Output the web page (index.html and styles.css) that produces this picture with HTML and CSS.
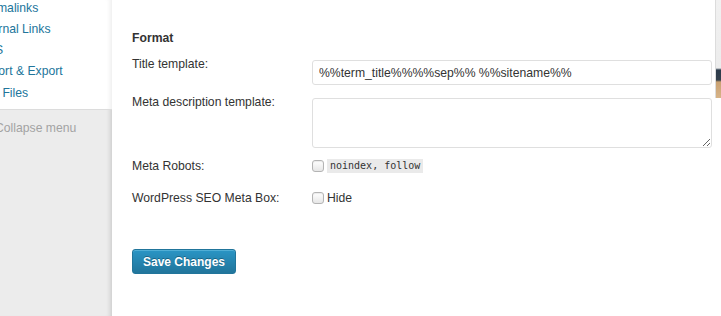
FILE: index.html
```html
<!DOCTYPE html>
<html lang="en">
<head>
    <meta charset="UTF-8">
    <meta name="viewport" content="width=device-width, initial-scale=1.0">
    <title>WordPress SEO - Titles</title>
    <link rel="stylesheet" href="styles.css">
</head>
<body>
    <div id="adminmenu">
        <ul class="submenu">
            <li><a href="#">Permalinks</a></li>
            <li><a href="#">Internal Links</a></li>
            <li><a href="#">RSS</a></li>
            <li><a href="#">Import &amp; Export</a></li>
            <li><a href="#">Edit Files</a></li>
        </ul>
        <div class="collapse">Collapse menu</div>
    </div>

    <div id="content">
        <h3>Format</h3>

        <div class="row row-title">
            <label for="title">Title template:</label>
            <input type="text" id="title" class="field" value="%%term_title%%%%sep%% %%sitename%%">
        </div>

        <div class="row row-desc">
            <label for="metadesc">Meta description template:</label>
            <textarea id="metadesc" class="field"></textarea>
        </div>

        <div class="row row-robots">
            <label for="noindex">Meta Robots:</label>
            <div class="check">
                <input type="checkbox" id="noindex">
                <code>noindex, follow</code>
            </div>
        </div>

        <div class="row row-hide">
            <label for="hide">WordPress SEO Meta Box:</label>
            <div class="check">
                <input type="checkbox" id="hide">
                <span>Hide</span>
            </div>
        </div>

        <button class="button-primary">Save Changes</button>
    </div>

    <div id="help-strip"></div>
</body>
</html>
```

FILE: styles.css
```css
body {
    font-family: "Liberation Sans", Arial, sans-serif;
    font-size: 12.2px;
    color: #333;
    background-color: #fff;
    display: flex;
    height: 316px;
    margin: 0;
    overflow: hidden;
}

#adminmenu {
    width: 112px;
    flex: none;
    background-color: #ececec;
    box-shadow: inset -5px 0 4px -3px rgba(0, 0, 0, 0.13);
    overflow: hidden;
}

.submenu {
    display: flow-root;
    box-sizing: border-box;
    list-style: none;
    margin: 0;
    padding: 0;
    height: 110px;
    background-color: #fff;
    border-bottom: 1px solid #dcdcdc;
    box-shadow: inset -5px 0 4px -3px rgba(0, 0, 0, 0.07);
}

.submenu li {
    height: 21.3px;
    line-height: 21.3px;
    margin-left: -22px;
    white-space: nowrap;
}

.submenu li:first-child {
    margin-top: -2.5px;
}

.submenu a {
    color: #21759b;
    text-decoration: none;
}

.collapse {
    margin: 10px 0 0 -5px;
    line-height: 16px;
    color: #a3a3a3;
    white-space: nowrap;
}

#content {
    flex: 1;
    padding: 31px 0 0 20px;
}

h3 {
    font-size: 12.2px;
    font-weight: bold;
    line-height: 15px;
    margin: 0 0 10px 0;
}

.row {
    display: grid;
    grid-template-columns: 180px 400px;
    align-items: start;
}

.row label {
    line-height: 16px;
}

.field {
    box-sizing: border-box;
    width: 400px;
    margin: 4px 0 0 0;
    border: 1px solid #dfdfdf;
    border-radius: 3px;
    background-color: #fff;
    font-family: "Liberation Sans", Arial, sans-serif;
    font-size: 12.2px;
    color: #333;
}

input.field {
    height: 25px;
    padding: 0 6px;
}

textarea.field {
    height: 50px;
    margin-top: 4px;
    resize: vertical;
}

.row-desc {
    margin-top: 9px;
}

.row-robots {
    margin-top: 10px;
}

.row-hide {
    margin-top: 16px;
}

.check {
    display: flex;
    align-items: center;
    height: 16px;
}

.check input {
    appearance: none;
    width: 12px;
    height: 12px;
    margin: 0 3px 0 0;
    border: 1px solid #b4b4b4;
    border-radius: 3px;
    background: linear-gradient(#fff, #e6e6e6);
    box-shadow: inset 0 1px 1px rgba(0, 0, 0, 0.08);
}

code {
    font-family: "DejaVu Sans Mono", monospace;
    font-size: 10px;
    line-height: 12px;
    padding: 1px 3px;
    background-color: #eaeaea;
    color: #333;
}

.button-primary {
    margin-top: 43px;
    height: 25px;
    padding: 0 10px;
    font-family: "Liberation Sans", Arial, sans-serif;
    font-size: 12px;
    font-weight: bold;
    color: #fff;
    text-shadow: 0 -1px 0 rgba(0, 0, 0, 0.3);
    background: linear-gradient(#2a95c5, #21759b);
    border: 1px solid #21759b;
    border-radius: 3px;
    box-shadow: inset 0 1px 0 rgba(120, 200, 230, 0.5);
    cursor: pointer;
}

#help-strip {
    width: 5px;
    height: 98px;
    flex: none;
    border-left: 1px solid #dcdcdc;
    background: linear-gradient(#f1f1f1 0, #ececec 68px, #2b3a4a 70px, #34404c 80px, #c9a172 82px, #d7b488 98px);
}
```
